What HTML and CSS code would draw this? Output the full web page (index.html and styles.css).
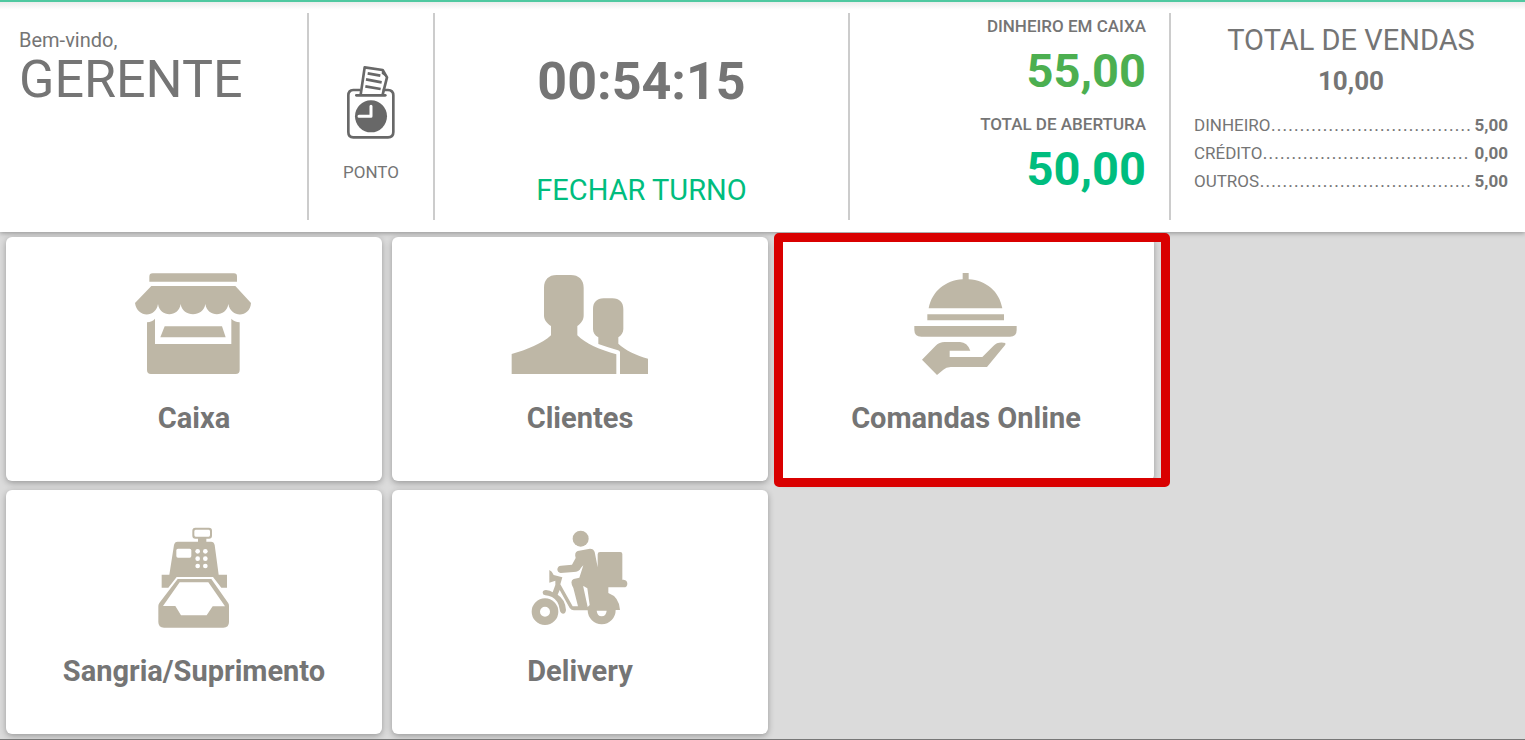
FILE: index.html
```html
<!doctype html>
<html lang="pt-BR">
	<head>
		<meta charset="utf-8">
		<title>Painel do gerente</title>
		<link rel="stylesheet" href="styles.css">
	</head>
	<body>
		<header class="topbar">
			<section class="panel welcome">
				<p class="greeting">Bem-vindo,</p>
				<h1 class="user">GERENTE</h1>
			</section>
			<button type="button" class="panel punch">
				<svg class="punch-icon" viewBox="33 15 180 252" aria-hidden="true">
					<path d="M90 105H70Q55 106 55 121V231Q55 247 70 247H174Q190 247 190 231V121Q190 106 174 105H158" fill="none" stroke="#686868" stroke-width="8"/>
					<path d="M79 121H166" stroke="#686868" stroke-width="8" stroke-linecap="round"/>
					<path d="M92 119L104 37L158 45L171 67L158 119" fill="none" stroke="#686868" stroke-width="8" stroke-linejoin="round"/>
					<path d="M156 44L155 56L170 67Z" fill="#686868"/>
					<path d="M113 55L151 62M108 73L155 82M106 94L152 102" stroke="#686868" stroke-width="8"/>
					<circle cx="123" cy="184" r="48" fill="#686868"/>
					<path d="M123 154V184H87" fill="none" stroke="#fff" stroke-width="9" stroke-linecap="round" stroke-linejoin="round"/>
				</svg>
				<span class="punch-label">PONTO</span>
			</button>
			<section class="panel shift">
				<time class="clock">00:54:15</time>
				<button type="button" class="close-shift">FECHAR TURNO</button>
			</section>
			<section class="panel cash">
				<h2 class="cash-label">DINHEIRO EM CAIXA</h2>
				<p class="cash-value current">55,00</p>
				<h2 class="cash-label">TOTAL DE ABERTURA</h2>
				<p class="cash-value opening">50,00</p>
			</section>
			<section class="panel sales">
				<h2 class="sales-title">TOTAL DE VENDAS</h2>
				<p class="sales-total">10,00</p>
				<dl class="sales-list">
					<div class="sales-row"><dt>DINHEIRO</dt><dd><span class="dots">...................................</span><strong>5,00</strong></dd></div>
					<div class="sales-row"><dt>CRÉDITO</dt><dd><span class="dots">....................................</span><strong>0,00</strong></dd></div>
					<div class="sales-row"><dt>OUTROS</dt><dd><span class="dots">.....................................</span><strong>5,00</strong></dd></div>
				</dl>
			</section>
		</header>
		<main class="menu">
			<a class="tile" href="#caixa">
				<svg class="tile-icon" viewBox="-3 0 420 375" aria-hidden="true">
					<path d="M73 65V50Q73 40 83 40H327Q336 40 336 50V65Z"/>
					<path d="M79 78H331L378 129C375 174 317 174 310 132C304 173 247 173 241 132C235 173 173 173 167 132C161 173 105 173 99 132C93 174 36 174 30 129Z"/>
					<path d="M66 187Q82 186 90 176V252H319V176Q328 186 344 187V330Q344 342 332 342H78Q66 342 66 330Z"/>
					<path d="M119 199H291L302 232H106Z"/>
				</svg>
				<span class="tile-label">Caixa</span>
			</a>
			<a class="tile" href="#clientes">
				<svg class="tile-icon" viewBox="0 0 480 375" aria-hidden="true">
					<path d="M35 342V282C80 270 128 250 153 226V198C140 190 132 180 132 166V83C132 59 146 45 170 45H212C236 45 251 59 251 83V166C251 180 244 190 232 198V226C256 250 300 270 349 283V342Z"/>
					<path d="M360 342V277Q360 271 349 269Q317 260 295 252V232C284 226 279 217 279 207V148C279 127 290 115 311 115H337C359 115 370 127 370 148V207C370 217 364 227 355 232V251C374 270 410 287 444 296V342Z"/>
				</svg>
				<span class="tile-label">Clientes</span>
			</a>
			<a class="tile highlighted" href="#comandas">
				<svg class="tile-icon" viewBox="3 0 390 375" aria-hidden="true">
					<path d="M86 145C96 94 136 61 188 58V39H206V58C258 61 298 94 307 145Z"/>
					<path d="M82 163H312V181H82Z"/>
					<path d="M43 198H350V210Q350 230 330 230H64Q43 230 43 210Z"/>
					<path d="M66 299L107 257Q118 246 134 246H180Q202 247 211 272H149V291H247L280 258Q293 244 316 249V254L261 321H152Q138 322 130 329L111 345Z"/>
				</svg>
				<span class="tile-label">Comandas Online</span>
			</a>
			<a class="tile second-row" href="#sangria">
				<svg class="tile-icon" viewBox="-3 -6 300 375" aria-hidden="true">
					<path fill-rule="evenodd" d="M151 38H192Q201 38 201 47V62Q201 71 192 71H184V80H198Q207 80 209 90L221 179H246V218H229L204 186H95L70 218H50V179H73L87 90Q89 80 98 80H159V71H151Q142 71 142 62V47Q142 38 151 38ZM152 44Q148 44 148 49V60Q148 65 152 65H191Q195 65 195 60V49Q195 44 191 44ZM99 101Q94 101 94 106V123Q94 128 99 128H134Q139 128 139 123V106Q139 101 134 101Z"/>
					<path fill-rule="evenodd" d="M98 192H199L250 265Q252 268 252 273V321Q252 338 235 338H57Q40 338 40 321V273Q40 268 43 264ZM104 202L54 273H91L108 301H185L203 274H240L190 202Z"/>
					<g fill="#fff">
						<circle cx="158" cy="109" r="7"/><circle cx="181" cy="109" r="7"/>
						<circle cx="158" cy="131" r="7"/><circle cx="181" cy="131" r="7"/>
						<circle cx="158" cy="153" r="7"/><circle cx="181" cy="153" r="7"/>
					</g>
				</svg>
				<span class="tile-label">Sangria/Suprimento</span>
			</a>
			<a class="tile" href="#delivery">
				<svg class="tile-icon" viewBox="0 -6 360 375" aria-hidden="true">
					<circle cx="182" cy="71" r="24"/>
					<path d="M240 111H301Q307 111 307 117V194H311Q322 196 322 206Q322 217 311 217H265V234Q298 246 300 285H287A42 42 0 0 1 203 286H162Q154 286 149 279L119 225L113 239Q136 253 138 285Q137 296 129 296Q120 295 119 283Q116 257 96 246Q84 241 76 241Q68 240 68 233Q68 226 78 225Q91 226 98 232L106 210V197L88 203V165Q96 168 101 180L127 187L121 208L158 274H174L160 219Q148 198 161 192L178 188L190 151L183 158Q177 171 161 171L122 174Q112 172 112 163Q113 153 123 152L156 149L167 129Q162 113 173 108L210 101Q221 101 224 111L233 157V118Q233 111 240 111Z"/>
					<path fill-rule="evenodd" d="M75 250A40 40 0 1 0 75 330A40 40 0 1 0 75 250ZM75 275A15 15 0 1 1 75 305A15 15 0 1 1 75 275Z"/>
					<path d="M190 216Q189 211 194 215L202 220L209 270L203 276Z" fill="#fff"/>
					<path d="M230 287H260Q258 304 245 304Q232 304 230 287Z" fill="#fff"/>
				</svg>
				<span class="tile-label">Delivery</span>
			</a>
		</main>
	</body>
</html>
```
FILE: styles.css
```css
* {
	box-sizing: border-box;
}

body {
	margin: 0;
	min-height: 100vh;
	background-color: #dbdbdb;
	border-bottom: 1px solid #777;
	color: #757575;
	font-family: Roboto, "Liberation Sans", sans-serif;
	font-size: 17px;
}

h1, h2, p, dl, dd {
	margin: 0;
	font-weight: 400;
}

button {
	border: 0;
	padding: 0;
	background: none;
	color: inherit;
	font-family: inherit;
	cursor: pointer;
}

/* Top bar */
.topbar {
	display: grid;
	grid-template-columns: 309fr 126fr 415fr 321fr 354fr;
	padding: 11px 0 12px;
	border-top: 2px solid #4fc8a0;
	background: linear-gradient(#ebebeb, #fff 8px);
	box-shadow: 0 1px 5px rgba(0,0,0,0.35);
}

.panel {
	min-height: 207px;
}

.panel:not(:last-child) {
	border-right: 2px solid #ccc;
}

.welcome {
	padding: 15px 19px 0;
}

.greeting {
	font-size: 20px;
	line-height: 24px;
}

.user {
	font-size: 52px;
	line-height: 56px;
}

.punch {
	display: flex;
	flex-direction: column;
	align-items: center;
	gap: 18px;
	padding-top: 47px;
}

.punch-icon {
	width: 60px;
	height: 84px;
}

.punch-label {
	font-size: 17px;
	line-height: 20px;
}

.shift {
	display: flex;
	flex-direction: column;
	align-items: center;
	gap: 62px;
	padding-top: 39px;
}

.clock {
	font-size: 52px;
	font-weight: 700;
	line-height: 60px;
}

.close-shift {
	color: #00bd7e;
	font-size: 29px;
	line-height: 32px;
}

.cash {
	padding: 3px 23px 0;
	text-align: right;
}

.cash-label {
	font-size: 17px;
	font-weight: 500;
	line-height: 20px;
}

.cash-value {
	margin: 8px 0 16px;
	font-size: 47px;
	font-weight: 700;
	line-height: 54px;
}

.cash-value.opening {
	margin-bottom: 0;
}

.current {
	color: #4caf50;
}

.opening {
	color: #00bd7e;
}

.sales {
	padding: 10px 17px 0 23px;
	text-align: center;
}

.sales-title {
	font-size: 29px;
	line-height: 34px;
}

.sales-total {
	margin: 8px 0 12px;
	font-size: 26px;
	font-weight: 700;
	line-height: 32px;
}

.sales-row {
	display: flex;
	align-items: baseline;
	height: 28px;
	line-height: 28px;
}

.sales-row dd {
	display: flex;
	align-items: baseline;
	flex: 1;
	min-width: 0;
}

.dots {
	flex: 1;
	min-width: 0;
	text-align: left;
	font-size: 24px;
	font-weight: 300;
}

.sales-row strong {
	font-weight: 700;
}

/* Menu */
.menu {
	display: grid;
	grid-template-columns: repeat(3, 376fr) 355fr;
	gap: 9px 10px;
	padding: 5px 6px;
}

.tile {
	position: relative;
	display: flex;
	flex-direction: column;
	align-items: center;
	gap: 17px;
	padding: 23px 0 47px;
	border-radius: 6px;
	background-color: #fff;
	box-shadow: 0 2px 6px rgba(0,0,0,0.3);
	color: inherit;
	text-decoration: none;
}

.second-row {
	grid-column-start: 1;
}

.tile-icon {
	height: 125px;
	fill: #beb7a6;
}

.tile-label {
	font-size: 29px;
	font-weight: 700;
	line-height: 32px;
}

.highlighted::after {
	content: "";
	position: absolute;
	inset: -4px -16px -6px -4px;
	border: 9px solid #d90000;
	border-radius: 5px;
}
```
